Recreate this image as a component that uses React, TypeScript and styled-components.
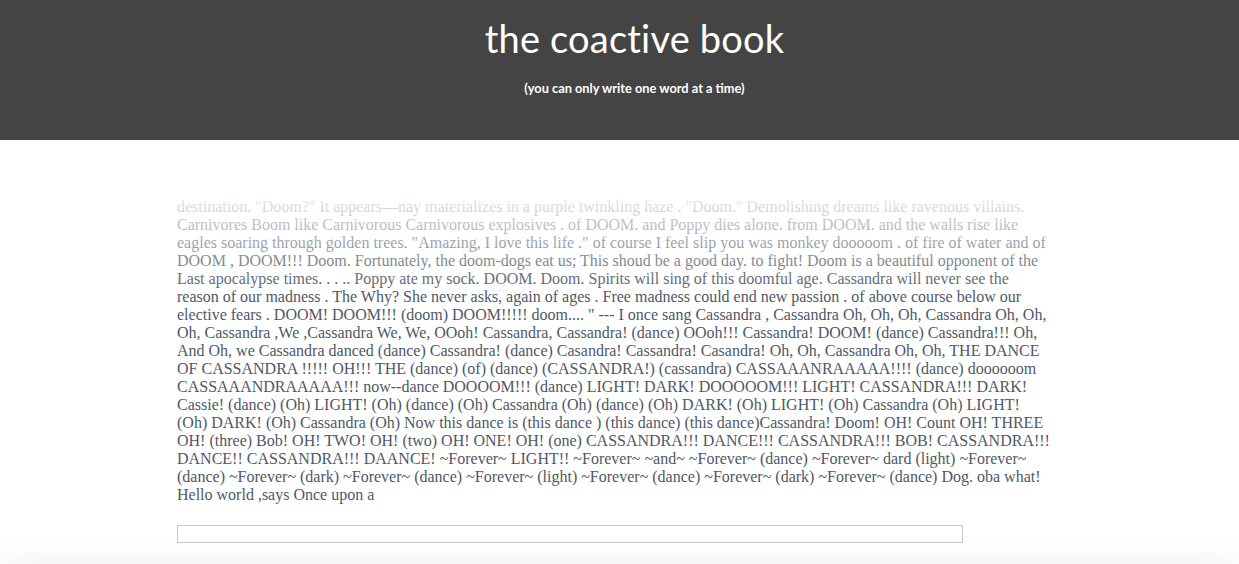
import React from "react";
import styled, { createGlobalStyle } from "styled-components";

const GlobalStyle = createGlobalStyle`
  html, body {
    margin: 0;
    padding: 0;
    background: #ffffff;
  }
  body {
    font-family: "Liberation Serif", "Times New Roman", serif;
  }
`;

const Header = styled.header`
  height: 140px;
  background: #444444;
  color: #ffffff;
  display: flex;
  flex-direction: column;
  align-items: center;
  box-sizing: border-box;
  padding: 13px 0 0 30px;
`;

const Title = styled.h1`
  margin: 0;
  font-family: Lato, "Noto Sans", sans-serif;
  font-weight: 400;
  font-size: 38px;
  line-height: 50px;
  letter-spacing: 0.2px;
`;

const Subtitle = styled.p`
  margin: 18px 0 0;
  font-family: Lato, "Noto Sans", sans-serif;
  font-weight: 700;
  font-size: 12.8px;
  line-height: 15px;
`;

const Main = styled.main`
  width: 885px;
  margin: 0 auto;
  padding-top: 58px;
  display: flex;
  flex-direction: column;
  align-items: flex-start;
`;

const Story = styled.div`
  position: relative;
  width: 100%;
  font-size: 16px;
  line-height: 18px;
  color: #4f5866;

  &::before {
    content: "";
    position: absolute;
    left: 0;
    right: 0;
    top: 0;
    height: 96px;
    background: linear-gradient(
      rgba(255, 255, 255, 0.86),
      rgba(255, 255, 255, 0)
    );
    pointer-events: none;
  }
`;

const Line = styled.div`
  white-space: nowrap;
`;

const WordInput = styled.input`
  margin-top: 21px;
  width: 786px;
  height: 18px;
  box-sizing: border-box;
  border: 1px solid #c8c8c8;
  padding: 0 4px;
  font-family: "Liberation Serif", serif;
  font-size: 14px;
  outline: none;
`;

const Footer = styled.footer`
  margin-top: 30px;
  height: 60px;
  background: #f2f2f2;
  box-shadow: 0 0 44px rgba(0, 0, 0, 0.11);
`;

const lines = [
  'destination. "Doom?" It appears\u2014nay materializes in a purple twinkling haze . "Doom." Demolishing dreams like ravenous villains.',
  "Carnivores Boom like Carnivorous Carnivorous explosives . of DOOM. and Poppy dies alone. from DOOM. and the walls rise like",
  'eagles soaring through golden trees. "Amazing, I love this life ." of course I feel slip you was monkey dooooom . of fire of water and of',
  "DOOM , DOOM!!! Doom. Fortunately, the doom-dogs eat us; This shoud be a good day. to fight! Doom is a beautiful opponent of the",
  "Last apocalypse times. . . .. Poppy ate my sock. DOOM. Doom. Spirits will sing of this doomful age. Cassandra will never see the",
  "reason of our madness . The Why? She never asks, again of ages . Free madness could end new passion . of above course below our",
  'elective fears . DOOM! DOOM!!! (doom) DOOM!!!!! doom.... " --- I once sang Cassandra , Cassandra Oh, Oh, Oh, Cassandra Oh, Oh,',
  "Oh, Cassandra ,We ,Cassandra We, We, OOoh! Cassandra, Cassandra! (dance) OOoh!!! Cassandra! DOOM! (dance) Cassandra!!! Oh,",
  "And Oh, we Cassandra danced (dance) Cassandra! (dance) Casandra! Cassandra! Casandra! Oh, Oh, Cassandra Oh, Oh, THE DANCE",
  "OF CASSANDRA !!!!! OH!!! THE (dance) (of) (dance) (CASSANDRA!) (cassandra) CASSAAANRAAAAA!!!! (dance) doooooom",
  "CASSAAANDRAAAAA!!! now--dance DOOOOM!!! (dance) LIGHT! DARK! DOOOOOM!!! LIGHT! CASSANDRA!!! DARK!",
  "Cassie! (dance) (Oh) LIGHT! (Oh) (dance) (Oh) Cassandra (Oh) (dance) (Oh) DARK! (Oh) LIGHT! (Oh) Cassandra (Oh) LIGHT!",
  "(Oh) DARK! (Oh) Cassandra (Oh) Now this dance is (this dance ) (this dance) (this dance)Cassandra! Doom! OH! Count OH! THREE",
  "OH! (three) Bob! OH! TWO! OH! (two) OH! ONE! OH! (one) CASSANDRA!!! DANCE!!! CASSANDRA!!! BOB! CASSANDRA!!!",
  "DANCE!! CASSANDRA!!! DAANCE! ~Forever~ LIGHT!! ~Forever~ ~and~ ~Forever~ (dance) ~Forever~ dard (light) ~Forever~",
  "(dance) ~Forever~ (dark) ~Forever~ (dance) ~Forever~ (light) ~Forever~ (dance) ~Forever~ (dark) ~Forever~ (dance) Dog. oba what!",
  "Hello world ,says Once upon a",
];

export default function App() {
  return (
    <>
      <GlobalStyle />
      <Header>
        <Title>the coactive book</Title>
        <Subtitle>(you can only write one word at a time)</Subtitle>
      </Header>
      <Main>
        <Story>
          {lines.map((l, i) => (
            <Line key={i}>{l}</Line>
          ))}
        </Story>
        <WordInput type="text" aria-label="next word" />
      </Main>
      <Footer />
    </>
  );
}
